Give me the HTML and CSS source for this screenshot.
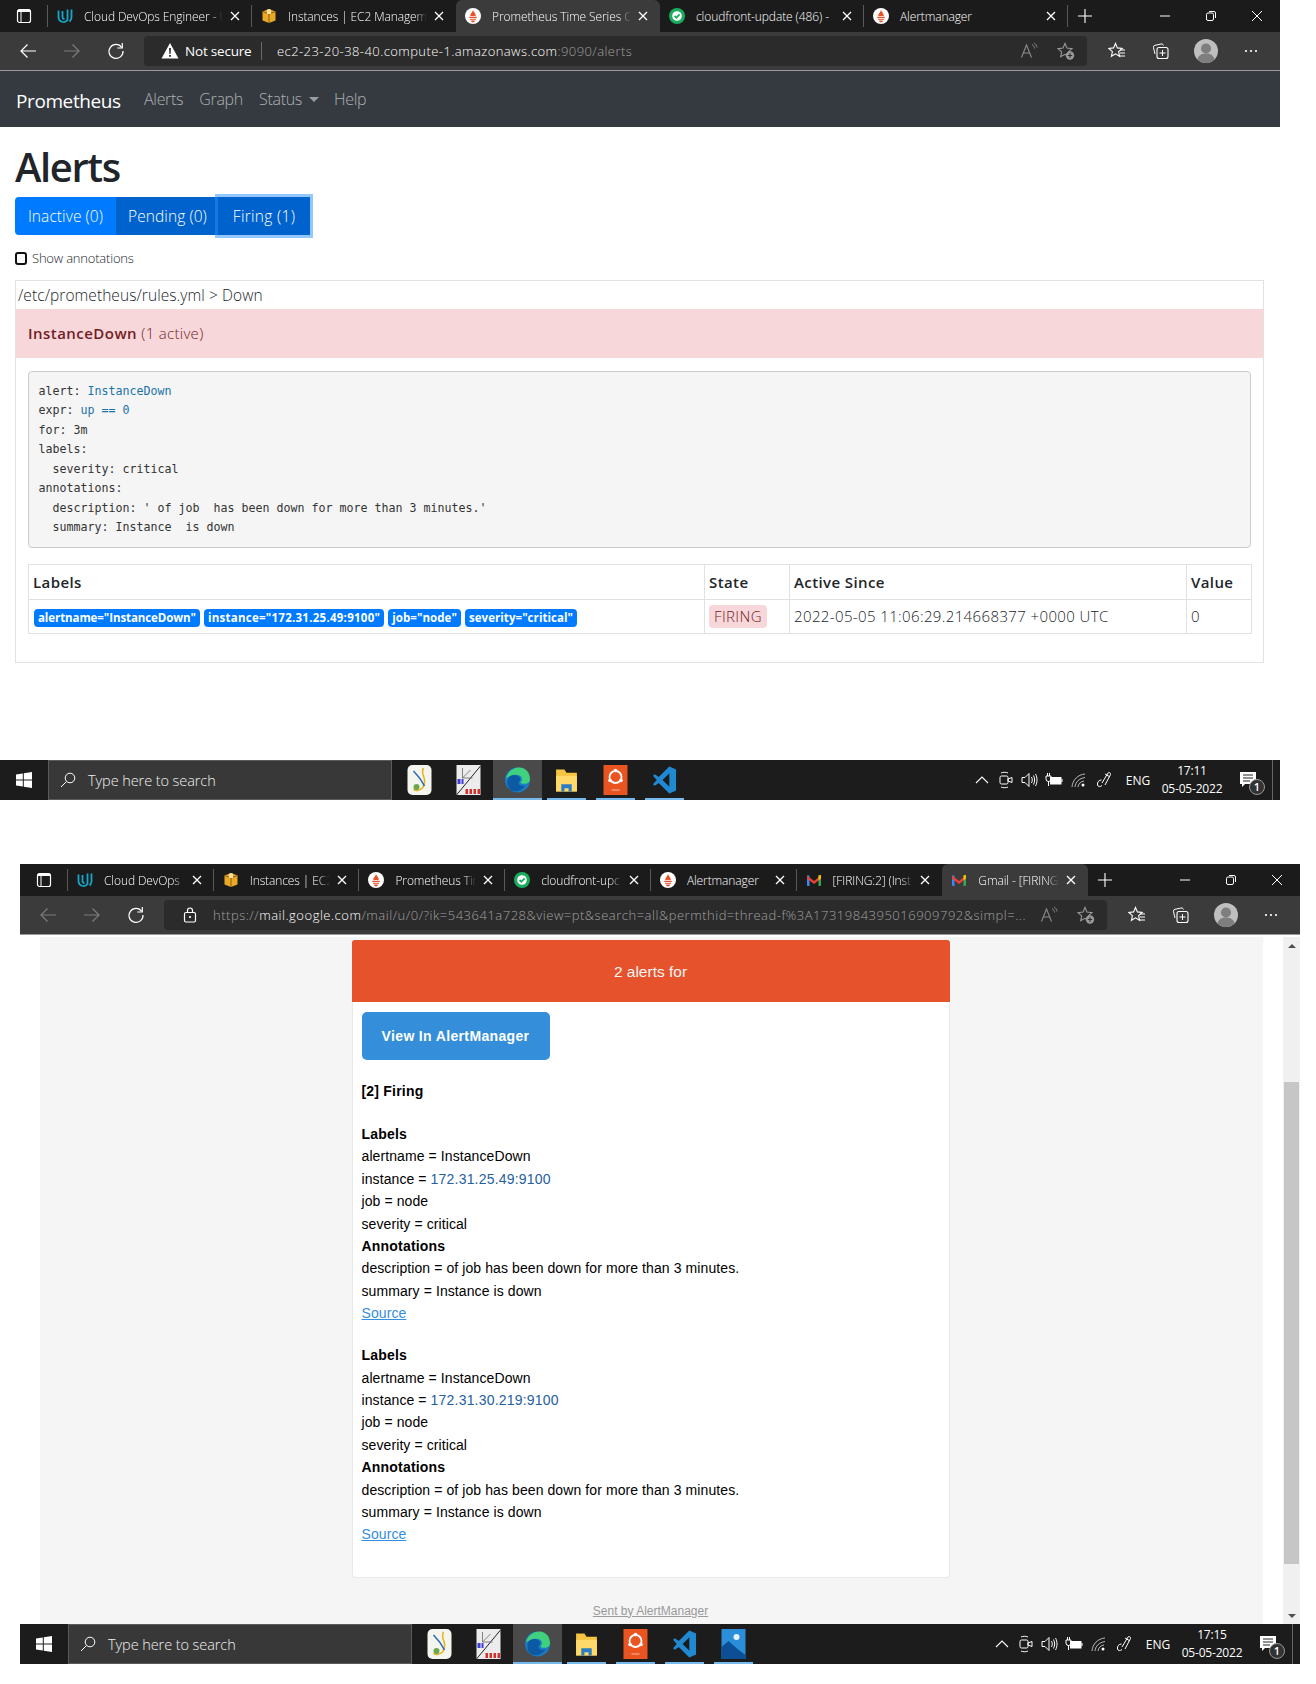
FILE: index.html
```html
<!DOCTYPE html>
<html lang="en">
<head>
<meta charset="utf-8">
<title>Prometheus alerts and Alertmanager email</title>
<link rel="stylesheet" href="styles.css">
</head>
<body>
<svg class="defs" xmlns="http://www.w3.org/2000/svg">
  <symbol id="i-panel" viewBox="0 0 16 16"><rect x="1.5" y="1.5" width="13" height="13" rx="2" fill="none" stroke="#fff" stroke-width="1.2"/><path d="M1.5 4h13v-1a1.5 1.5 0 0 0-1.500-1.500h-10a1.5 1.5 0 0 0-1.500 1.500z" fill="#fff"/><path d="M5 4v10.500" stroke="#fff"/></symbol>
  <symbol id="i-udacity" viewBox="0 0 16 16"><path d="M1.500 2.500v6.500a5 5 0 0 0 9 3V1.500M5.500 3v6.500a2 2 0 0 0 2 1.500M14.500 1.500v8a6 6 0 0 1-2 4" fill="none" stroke="#15a6c9" stroke-width="1.800"/></symbol>
  <symbol id="i-aws" viewBox="0 0 16 16"><path d="M8 1l6.500 2.500v9L8 15l-6.500-2.500v-9z" fill="#e9a825"/><path d="M1.500 3.500L8 6l6.500-2.500M8 6v9" fill="none" stroke="#8a5d10"/><path d="M6 1.800L8 1l2 .8v4.100H6z" fill="#f6dfa2"/></symbol>
  <symbol id="i-prom" viewBox="0 0 16 16"><circle cx="8" cy="8" r="8" fill="#fff"/><path d="M8 2c.5 2 2.800 3 2.800 6H5.200C5.200 5.500 7.500 4.500 8 2z" fill="#e6522c"/><path d="M4.300 8.700h7.400v1.300H4.300zM5 10.800h6v1H5zM6 12.500h4a2 2 0 0 1-4 0z" fill="#e6522c"/></symbol>
  <symbol id="i-check" viewBox="0 0 16 16"><circle cx="8" cy="8" r="8" fill="#1bab5e"/><circle cx="8" cy="8" r="4.800" fill="#fff"/><path d="M5.600 8l1.800 1.800 3.200-3.400" fill="none" stroke="#1bab5e" stroke-width="1.800"/></symbol>
  <symbol id="i-gmail" viewBox="0 0 16 16"><path d="M1 3.500h2.500V14H2a1 1 0 0 1-1-1z" fill="#4285f4"/><path d="M12.500 3.500H15V13a1 1 0 0 1-1 1h-1.500z" fill="#34a853"/><path d="M1 3.500L8 9l7-5.500v3L8 12 1 6.500z" fill="#ea4335"/><path d="M12.500 3.500L15 2.800v3.700l-2.500 2z" fill="#fbbc04"/></symbol>
  <symbol id="i-x" viewBox="0 0 12 12"><path d="M2 2l8 8M10 2l-8 8" stroke="#fff" stroke-width="1.300"/></symbol>
  <symbol id="i-plus" viewBox="0 0 16 16"><path d="M8 1v14M1 8h14" stroke="#fff" stroke-width="1.100"/></symbol>
  <symbol id="i-min" viewBox="0 0 12 12"><path d="M1 6h10" stroke="#fff"/></symbol>
  <symbol id="i-restore" viewBox="0 0 12 12"><rect x="1.500" y="3" width="7" height="7.500" rx="1.500" fill="none" stroke="#fff"/><path d="M4 1.500h5a1.500 1.500 0 0 1 1.500 1.500v5" fill="none" stroke="#fff"/></symbol>
  <symbol id="i-winx" viewBox="0 0 12 12"><path d="M1 1l10 10M11 1L1 11" stroke="#fff"/></symbol>
  <symbol id="i-back" viewBox="0 0 18 18"><path d="M17 9H2M8.500 2.500L2 9l6.500 6.500" fill="none" stroke="currentColor" stroke-width="1.200"/></symbol>
  <symbol id="i-fwd" viewBox="0 0 18 18"><path d="M1 9h15M9.500 2.500L16 9l-6.500 6.500" fill="none" stroke="currentColor" stroke-width="1.200"/></symbol>
  <symbol id="i-reload" viewBox="0 0 18 18"><path d="M14.800 5.500A7 7 0 1 0 16 9" fill="none" stroke="#fff" stroke-width="1.200"/><path d="M15.300 1v5h-5" fill="none" stroke="#fff" stroke-width="1.200"/></symbol>
  <symbol id="i-warn" viewBox="0 0 18 18"><path d="M9 1l8.500 15.500H.5z" fill="#fff"/><path d="M8.100 6h1.800l-.3 6H8.400zM8.100 13h1.800v1.800H8.100z" fill="#222"/></symbol>
  <symbol id="i-lock" viewBox="0 0 14 16"><rect x="1.500" y="5.500" width="11" height="9.500" rx="1.500" fill="none" stroke="#fff" stroke-width="1.200"/><path d="M4.500 5.500V3.500a2.500 2.500 0 0 1 5 0v2" fill="none" stroke="#fff" stroke-width="1.200"/><circle cx="7" cy="10" r="1.100" fill="#fff"/></symbol>
  <symbol id="i-read" viewBox="0 0 18 18"><path d="M1.500 15.500L6.500 3l5 12.500M3.200 11h6.600" fill="none" stroke="#8c8c8c" stroke-width="1.100"/><path d="M12 2.500c1.500.8 2.300 2 2.500 4M14 1c1.800 1 2.800 2.500 3 4.500" fill="none" stroke="#8c8c8c" stroke-width=".9"/></symbol>
  <symbol id="i-favadd" viewBox="0 0 18 18"><path d="M8 1.500l2 4.600 5 .5-3.700 3.300 1 4.800L8 12.300l-4.300 2.400 1-4.800L1 6.600l5-.5z" fill="none" stroke="#9a9a9a" stroke-width="1.100"/><circle cx="13" cy="13.500" r="4.200" fill="#9a9a9a"/><path d="M13 11.300v4.400M10.800 13.500h4.400" stroke="#2b2b2b" stroke-width="1.100"/></symbol>
  <symbol id="i-favs" viewBox="0 0 18 18"><path d="M7.500 1.500l1.900 4.400 4.800.5-3.600 3.200 1 4.700-4.100-2.400-4.100 2.400 1-4.700L.8 6.400l4.800-.5z" fill="none" stroke="#fff" stroke-width="1.100"/><path d="M12 8h5M12 11h5M11 14h6" stroke="#fff"/></symbol>
  <symbol id="i-coll" viewBox="0 0 18 18"><rect x="6" y="5.500" width="11" height="11" rx="2" fill="none" stroke="#fff" stroke-width="1.100"/><path d="M11.500 8v6M8.500 11h6" stroke="#fff"/><path d="M12.500 3.500l-.5-.9a2 2 0 0 0-2-.6L4 3.300A2 2 0 0 0 2.500 5.700L4 12" fill="none" stroke="#fff"/></symbol>
  <symbol id="i-user" viewBox="0 0 24 24"><circle cx="12" cy="12" r="12" fill="#bfbfbf"/><circle cx="12" cy="9.500" r="5" fill="#7e7e7e"/><path d="M3.500 20.500c1-5 5-6 8.500-6s7.500 1 8.500 6a12 12 0 0 1-17 0z" fill="#7e7e7e"/></symbol>
  <symbol id="i-more" viewBox="0 0 16 16"><circle cx="3" cy="8" r="1.100" fill="#fff"/><circle cx="8" cy="8" r="1.100" fill="#fff"/><circle cx="13" cy="8" r="1.100" fill="#fff"/></symbol>
  <symbol id="i-win" viewBox="0 0 16 16"><path d="M0 2.500l6.800-1v6H0zM7.800 1.300L16 0v7.500H7.800zM0 8.500h6.800v6l-6.800-1zM7.800 8.500H16V16l-8.200-1.300z" fill="#fff"/></symbol>
  <symbol id="i-search" viewBox="0 0 16 16"><circle cx="10" cy="6" r="4.800" fill="none" stroke="#fff"/><path d="M6.500 9.500L1 15" stroke="#fff"/></symbol>
  <symbol id="i-app1" viewBox="0 0 24 30"><rect width="24" height="30" rx="5" fill="#f5f5f0"/><path d="M16 3c-4 7 5 10-1 20-3 3-8 3-9 1" fill="none" stroke="#e6b422" stroke-width="1.600"/><path d="M6 6c5 5 8 9 11 15" fill="none" stroke="#2b6cb0" stroke-width="1.600"/><circle cx="9" cy="22" r="3" fill="#6aa84f"/></symbol>
  <symbol id="i-app2" viewBox="0 0 24 30"><rect width="24" height="30" fill="#ececec"/><path d="M0 30L24 1" stroke="#222"/><path d="M6 3v10h10M6 13l8-8" fill="none" stroke="#666" stroke-width=".8"/><path d="M1 14h3v5H1zM5 14h2v5H5z" fill="#3d3dd8"/><path d="M9 24h2.500v5H9zM13 24h2.500v5H13zM17 24h2.500v5H17zM21 24h2.500v5H21z" fill="#d32f2f"/></symbol>
  <symbol id="i-edge" viewBox="0 0 26 26"><circle cx="13" cy="13" r="13" fill="#1a7bc4"/><path d="M1 11C3 3 10 0 15 0c7 0 11 6 11 12 0 3-2 5-6 5-3 0-4-1-4-2 2-1 2-3 1-5-2-3-8-3-11-1z" fill="#3fd17d"/><path d="M4 10c3-3 8-3 11 0 1 2 1 4-1 5 0 3 3 5 7 4-3 5-9 7-14 5-4-2-6-8-3-14z" fill="#0c59a4"/></symbol>
  <symbol id="i-folder" viewBox="0 0 24 26"><path d="M2 3h8l2 3h10v18H2z" fill="#f6c342"/><path d="M2 9h20v15H2z" fill="#ffd96a"/><path d="M7 24v-7h10v7h-3v-3h-4v3z" fill="#2b7cc4"/></symbol>
  <symbol id="i-ubuntu" viewBox="0 0 24 30"><rect width="24" height="30" fill="#e95420"/><circle cx="12" cy="12" r="6" fill="none" stroke="#fff" stroke-width="1.800"/><circle cx="12" cy="5.500" r="1.800" fill="#fff"/><circle cx="6.500" cy="15.500" r="1.800" fill="#fff"/><circle cx="17.500" cy="15.500" r="1.800" fill="#fff"/><path d="M8 25h8" stroke="#f7b9a2"/></symbol>
  <symbol id="i-vscode" viewBox="0 0 26 30"><path d="M18 1l7 3v22l-7 3L7 18l-4 3-2-1.500L5 15 1 10.500 3 9l4 3z" fill="#1f8ad2"/><path d="M18 8v14l-7-7z" fill="#1c1c1c"/></symbol>
  <symbol id="i-photos" viewBox="0 0 24 30"><rect width="24" height="30" fill="#2a8fd8"/><circle cx="15" cy="8" r="3" fill="#e8f4fc"/><path d="M0 30V18l7-6 9 8 8 6v4z" fill="#0d4f94"/></symbol>
  <symbol id="i-chev" viewBox="0 0 14 14"><path d="M1 10l6-6 6 6" fill="none" stroke="#fff" stroke-width="1.100"/></symbol>
  <symbol id="i-cam" viewBox="0 0 14 18"><rect x="1" y="5" width="8" height="8" rx="1.500" fill="none" stroke="#fff"/><path d="M9 8l4-1.500v5L9 10zM2 2c2-1 5-1 7 0M2 16c2 1 5 1 7 0" fill="none" stroke="#fff"/></symbol>
  <symbol id="i-vol" viewBox="0 0 18 16"><path d="M1 5.500h3l4-4v13l-4-4H1z" fill="none" stroke="#fff"/><path d="M10.500 5c1 2 1 4 0 6M12.500 3.500c1.500 3 1.500 6 0 9M14.500 2c2 3.500 2 8.500 0 12" fill="none" stroke="#fff"/></symbol>
  <symbol id="i-batt" viewBox="0 0 18 14"><rect x="5.500" y="4.500" width="10.500" height="6.500" fill="#fff" stroke="#fff"/><path d="M17 6v3" stroke="#fff"/><path d="M1 3h5v3a2 2 0 0 1-5 0zM2.500 0v3M4.500 0v3M3.500 8v5" fill="none" stroke="#fff"/></symbol>
  <symbol id="i-wifi" viewBox="0 0 16 16"><path d="M1 15C1.500 8 7 2.500 14 2M4 15c.5-5 4-8.500 10-9.500M7 15c.3-3 2.500-5.500 6-6" fill="none" stroke="#fff" stroke-width=".9" opacity=".75"/><circle cx="12" cy="13" r="1.500" fill="#fff"/></symbol>
  <symbol id="i-pen" viewBox="0 0 18 18"><path d="M6 12l6-10c1-1 3 0 2.500 1.500L9 14M9 3l5 3M5.500 9C3 9 1 11 1.500 14c.4 2 3 2 4.500.5" fill="none" stroke="#fff"/></symbol>
  <symbol id="i-notif" viewBox="0 0 16 16"><path d="M0 0h16v12H5l-3 3v-3H0z" fill="#fff"/><path d="M3 3h10M3 6h10M3 9h7" stroke="#222"/></symbol>
</svg>

<section class="shot">
  <header class="tabbar">
    <div class="tab-start"><svg class="i16"><use href="#i-panel"/></svg></div>
    <div class="tabs">
      <div class="tab sep"><svg class="i16"><use href="#i-udacity"/></svg><span class="tab-title fade">Cloud DevOps Engineer - U</span><svg class="ix"><use href="#i-x"/></svg></div>
      <div class="tab"><svg class="i16"><use href="#i-aws"/></svg><span class="tab-title fade">Instances | EC2 Managem</span><svg class="ix"><use href="#i-x"/></svg></div>
      <div class="tab active"><svg class="i16"><use href="#i-prom"/></svg><span class="tab-title fade">Prometheus Time Series C</span><svg class="ix"><use href="#i-x"/></svg></div>
      <div class="tab sep"><svg class="i16"><use href="#i-check"/></svg><span class="tab-title">cloudfront-update (486) -</span><svg class="ix"><use href="#i-x"/></svg></div>
      <div class="tab sep"><svg class="i16"><use href="#i-prom"/></svg><span class="tab-title">Alertmanager</span><svg class="ix"><use href="#i-x"/></svg></div>
    </div>
    <svg class="plus"><use href="#i-plus"/></svg>
    <div class="winctl"><svg class="i12"><use href="#i-min"/></svg><svg class="i12"><use href="#i-restore"/></svg><svg class="i12"><use href="#i-winx"/></svg></div>
  </header>
  <div class="toolbar">
    <div class="navbtns"><svg class="i18 on"><use href="#i-back"/></svg><svg class="i18 off"><use href="#i-fwd"/></svg><svg class="i18"><use href="#i-reload"/></svg></div>
    <div class="omni">
      <svg class="i18 warn"><use href="#i-warn"/></svg>
      <span class="notsecure">Not secure</span>
      <span class="url url-a">ec2-23-20-38-40.compute-1.amazonaws.com<span class="dim">:9090/alerts</span></span>
      <svg class="i18 omni-r"><use href="#i-read"/></svg><svg class="i18 omni-s"><use href="#i-favadd"/></svg>
    </div>
    <div class="tools"><svg class="i18"><use href="#i-favs"/></svg><svg class="i18"><use href="#i-coll"/></svg><svg class="i22"><use href="#i-user"/></svg><svg class="i16"><use href="#i-more"/></svg></div>
  </div>

  <nav class="navbar">
    <a class="brand">Prometheus</a>
    <a class="navlink">Alerts</a>
    <a class="navlink">Graph</a>
    <a class="navlink caret">Status</a>
    <a class="navlink">Help</a>
  </nav>

  <main class="page">
    <h1 class="title">Alerts</h1>
    <div class="btngroup">
      <span class="btn btn-inactive">Inactive (0)</span>
      <span class="btn btn-pending">Pending (0)</span>
      <span class="btn btn-firing">Firing (1)</span>
    </div>
    <label class="annot"><span class="cb"></span>Show annotations</label>
    <div class="panel">
      <div class="rulepath">/etc/prometheus/rules.yml &gt; Down</div>
      <div class="alertrow"><strong>InstanceDown</strong> (1 active)</div>
      <div class="panelbody">
<pre class="rule">alert: <span class="hl">InstanceDown</span>
expr: <span class="hl">up == 0</span>
for: 3m
labels:
  severity: critical
annotations:
  description: ' of job  has been down for more than 3 minutes.'
  summary: Instance  is down</pre>
        <table class="alerts">
          <thead><tr><th class="c-labels">Labels</th><th class="c-state">State</th><th class="c-since">Active Since</th><th class="c-value">Value</th></tr></thead>
          <tbody><tr>
            <td class="labels"><span class="badge">alertname="InstanceDown"</span><span class="badge b-inst">instance="172.31.25.49:9100"</span><span class="badge b-wide">job="node"</span><span class="badge b-wide">severity="critical"</span></td>
            <td><span class="state">FIRING</span></td>
            <td>2022-05-05 11:06:29.214668377 +0000 UTC</td>
            <td>0</td>
          </tr></tbody>
        </table>
      </div>
    </div>
  </main>

  <footer class="taskbar">
    <div class="startbtn"><svg class="i16"><use href="#i-win"/></svg></div>
    <div class="searchbox"><svg class="i16"><use href="#i-search"/></svg><span>Type here to search</span></div>
    <div class="tile"><svg class="ic-app"><use href="#i-app1"/></svg></div>
    <div class="tile"><svg class="ic-app"><use href="#i-app2"/></svg></div>
    <div class="tile running focus"><svg class="ic-app"><use href="#i-edge"/></svg></div>
    <div class="tile running"><svg class="ic-app"><use href="#i-folder"/></svg></div>
    <div class="tile running"><svg class="ic-app"><use href="#i-ubuntu"/></svg></div>
    <div class="tile running"><svg class="ic-app"><use href="#i-vscode"/></svg></div>
    <div class="tray">
      <span class="t24"><svg class="i14"><use href="#i-chev"/></svg></span>
      <span class="t24"><svg class="i18"><use href="#i-cam"/></svg></span>
      <span class="t24"><svg class="i18"><use href="#i-vol"/></svg></span>
      <span class="t24"><svg class="i18"><use href="#i-batt"/></svg></span>
      <span class="t25"><svg class="i16"><use href="#i-wifi"/></svg></span>
      <span class="t28"><svg class="i18"><use href="#i-pen"/></svg></span>
      <span class="eng">ENG</span>
      <span class="clock">17:11<br>05-05-2022</span>
      <span class="notif"><svg class="i16"><use href="#i-notif"/></svg><span class="notifnum">1</span></span>
      <span class="showdesk"></span>
    </div>
  </footer>
</section>

<section class="shot second">
  <header class="tabbar">
    <div class="tab-start"><svg class="i16"><use href="#i-panel"/></svg></div>
    <div class="tabs">
      <div class="tab sep"><svg class="i16"><use href="#i-udacity"/></svg><span class="tab-title fade">Cloud DevOps</span><svg class="ix"><use href="#i-x"/></svg></div>
      <div class="tab sep"><svg class="i16"><use href="#i-aws"/></svg><span class="tab-title fade">Instances | EC2</span><svg class="ix"><use href="#i-x"/></svg></div>
      <div class="tab sep"><svg class="i16"><use href="#i-prom"/></svg><span class="tab-title fade">Prometheus Tir</span><svg class="ix"><use href="#i-x"/></svg></div>
      <div class="tab sep"><svg class="i16"><use href="#i-check"/></svg><span class="tab-title fade">cloudfront-upc</span><svg class="ix"><use href="#i-x"/></svg></div>
      <div class="tab sep"><svg class="i16"><use href="#i-prom"/></svg><span class="tab-title">Alertmanager</span><svg class="ix"><use href="#i-x"/></svg></div>
      <div class="tab"><svg class="i16"><use href="#i-gmail"/></svg><span class="tab-title fade">[FIRING:2] (Inst</span><svg class="ix"><use href="#i-x"/></svg></div>
      <div class="tab active"><svg class="i16"><use href="#i-gmail"/></svg><span class="tab-title fade">Gmail - [FIRING</span><svg class="ix"><use href="#i-x"/></svg></div>
    </div>
    <svg class="plus"><use href="#i-plus"/></svg>
    <div class="winctl"><svg class="i12"><use href="#i-min"/></svg><svg class="i12"><use href="#i-restore"/></svg><svg class="i12"><use href="#i-winx"/></svg></div>
  </header>
  <div class="toolbar">
    <div class="navbtns"><svg class="i18 off"><use href="#i-back"/></svg><svg class="i18 off"><use href="#i-fwd"/></svg><svg class="i18"><use href="#i-reload"/></svg></div>
    <div class="omni">
      <svg class="i16 lock"><use href="#i-lock"/></svg>
      <span class="url url-b"><span class="dim">https://</span>mail.google.com<span class="dim">/mail/u/0/?ik=543641a728&amp;view=pt&amp;search=all&amp;permthid=thread-f%3A1731984395016909792&amp;simpl=...</span></span>
      <svg class="i18 omni-r"><use href="#i-read"/></svg><svg class="i18 omni-s"><use href="#i-favadd"/></svg>
    </div>
    <div class="tools"><svg class="i18"><use href="#i-favs"/></svg><svg class="i18"><use href="#i-coll"/></svg><svg class="i22"><use href="#i-user"/></svg><svg class="i16"><use href="#i-more"/></svg></div>
  </div>

  <div class="gmail">
    <div class="mailbg">
      <div class="card">
        <div class="cardhead">2 alerts for</div>
        <div class="cardbody">
          <a class="viewbtn">View In AlertManager</a>
          <div class="firing"><strong>[2] Firing</strong></div>
          <div class="alertblock">
            <div><strong>Labels</strong></div>
            <div>alertname = InstanceDown</div>
            <div>instance = <a class="ip">172.31.25.49:9100</a></div>
            <div>job = node</div>
            <div>severity = critical</div>
            <div><strong>Annotations</strong></div>
            <div>description = of job has been down for more than 3 minutes.</div>
            <div>summary = Instance is down</div>
            <div><a class="source">Source</a></div>
          </div>
          <div class="alertblock">
            <div><strong>Labels</strong></div>
            <div>alertname = InstanceDown</div>
            <div>instance = <a class="ip">172.31.30.219:9100</a></div>
            <div>job = node</div>
            <div>severity = critical</div>
            <div><strong>Annotations</strong></div>
            <div>description = of job has been down for more than 3 minutes.</div>
            <div>summary = Instance is down</div>
            <div><a class="source">Source</a></div>
          </div>
        </div>
      </div>
      <div class="sentby">Sent by AlertManager</div>
    </div>
    <div class="scrollbar">
      <span class="arrow-up"></span>
      <span class="thumb"></span>
      <span class="arrow-down"></span>
    </div>
  </div>

  <footer class="taskbar">
    <div class="startbtn"><svg class="i16"><use href="#i-win"/></svg></div>
    <div class="searchbox"><svg class="i16"><use href="#i-search"/></svg><span>Type here to search</span></div>
    <div class="tile"><svg class="ic-app"><use href="#i-app1"/></svg></div>
    <div class="tile"><svg class="ic-app"><use href="#i-app2"/></svg></div>
    <div class="tile running focus"><svg class="ic-app"><use href="#i-edge"/></svg></div>
    <div class="tile running"><svg class="ic-app"><use href="#i-folder"/></svg></div>
    <div class="tile running"><svg class="ic-app"><use href="#i-ubuntu"/></svg></div>
    <div class="tile running"><svg class="ic-app"><use href="#i-vscode"/></svg></div>
    <div class="tile running"><svg class="ic-app"><use href="#i-photos"/></svg></div>
    <div class="tray">
      <span class="t24"><svg class="i14"><use href="#i-chev"/></svg></span>
      <span class="t24"><svg class="i18"><use href="#i-cam"/></svg></span>
      <span class="t24"><svg class="i18"><use href="#i-vol"/></svg></span>
      <span class="t24"><svg class="i18"><use href="#i-batt"/></svg></span>
      <span class="t25"><svg class="i16"><use href="#i-wifi"/></svg></span>
      <span class="t28"><svg class="i18"><use href="#i-pen"/></svg></span>
      <span class="eng">ENG</span>
      <span class="clock">17:15<br>05-05-2022</span>
      <span class="notif"><svg class="i16"><use href="#i-notif"/></svg><span class="notifnum">1</span></span>
      <span class="showdesk"></span>
    </div>
  </footer>
</section>
</body>
</html>
```

FILE: styles.css
```css
* { box-sizing: border-box; }
html, body { margin: 0; padding: 0; background: #fff; }
body { font-family: "Open Sans", "Liberation Sans", sans-serif; color: #212529; width: 1316px; height: 1684px; overflow: hidden; }
svg { display: block; flex: none; }
.defs { display: none; }
.i12 { width: 12px; height: 12px; }
.i14 { width: 14px; height: 14px; }
.i16 { width: 16px; height: 16px; }
.i18 { width: 18px; height: 18px; }
.i22 { width: 24px; height: 24px; }

.shot { width: 1280px; height: 800px; display: flex; flex-direction: column; }
.second { margin: 64px 0 0 20px; }

/* browser chrome */
.tabbar { height: 32px; background: #1b1b1b; display: flex; align-items: stretch; flex: none; }
.tab-start { width: 48px; padding-left: 16px; display: flex; align-items: center; border-right: 1px solid #5a5a5a; margin: 5px 0; }
.tabs { width: 1020px; display: flex; flex: none; }
.tab { flex: 1 1 0; min-width: 0; display: flex; align-items: center; padding: 0 11px 0 9px; gap: 11px; position: relative; }
.tab.sep::after { content: ""; position: absolute; right: 0; top: 5px; bottom: 5px; width: 1px; background: #5a5a5a; }
.tab.active { background: #3b3b3b; border-radius: 6px 6px 0 0; }
.tab-title { flex: 1; min-width: 0; white-space: nowrap; font-size: 12px; font-weight: 300; letter-spacing: -.1px; color: #fff; }
.tab-title.fade { -webkit-mask-image: linear-gradient(to right, #000 calc(100% - 12px), transparent); mask-image: linear-gradient(to right, #000 calc(100% - 12px), transparent); }
.ix { width: 12px; height: 12px; margin-left: -5px; }
.plus { width: 16px; height: 16px; align-self: center; margin-left: 9px; }
.winctl { margin-left: auto; display: flex; align-items: center; gap: 34px; padding-right: 17px; }
.toolbar { height: 39px; background: #3b3b3b; border-bottom: 1px solid #9a9a9a; display: flex; align-items: center; flex: none; color: #fff; }
.navbtns { width: 144px; display: flex; gap: 26px; padding-left: 19px; flex: none; }
.navbtns .on { color: #fff; }
.navbtns .off { color: #7d7d7d; }
.omni { width: 943px; height: 30px; background: #2b2b2b; border-radius: 4px; display: flex; align-items: center; font-size: 13px; color: #fff; flex: none; }
.warn { margin-left: 17px; }
.notsecure { margin-left: 6px; width: 77px; height: 18px; line-height: 18px; border-right: 1px solid #6a6a6a; font-size: 13.500px; letter-spacing: -.2px; }
.url { white-space: nowrap; letter-spacing: .42px; font-weight: 300; }
.url-a { margin-left: 15px; width: 540px; flex: none; }
.url-b { margin-left: 16px; width: 826px; flex: none; letter-spacing: .51px; }
.lock { margin-left: 19px; width: 14px; }
.dim { color: #a0a0a0; }
.omni-r { margin-left: auto; }
.omni-s { margin: 0 12px 0 19px; }
.tools { display: flex; align-items: center; padding-left: 21px; gap: 25px; }

/* prometheus */
.navbar { height: 56px; background: #343a40; display: flex; align-items: center; flex: none; padding-left: 16px; }
.brand { font-size: 19px; color: #fff; width: 128px; letter-spacing: -.4px; margin-top: 3px; }
.navlink { font-size: 16px; font-weight: 300; color: rgba(255, 255, 255, .6); margin-right: 16px; letter-spacing: -.3px; }
.navlink.caret { display: flex; align-items: center; margin-right: 15px; }
.navlink.caret::after { content: ""; margin-left: 7px; border-top: 5px solid rgba(255, 255, 255, .5); border-left: 5px solid transparent; border-right: 5px solid transparent; }
.page { padding: 0 16px 0 15px; flex: 1; }
.title { margin: 0; padding-top: 16px; font-size: 40px; line-height: 48px; font-weight: 600; letter-spacing: -1.4px; height: 70px; color: #212529; }
.btngroup { display: flex; height: 38px; }
.btn { display: flex; align-items: center; justify-content: center; color: #fff; font-size: 15.500px; font-weight: 300; letter-spacing: .08px; }
.btn-inactive { width: 101px; background: #007bff; border-radius: 4px 0 0 4px; }
.btn-pending { width: 102px; padding-left: 1px; background: #0062cc; }
.btn-firing { width: 92px; background: #0062cc; box-shadow: 0 0 0 3px rgba(38, 143, 255, .5); letter-spacing: .3px; }
.annot { display: flex; align-items: center; height: 18px; margin-top: 14px; font-size: 13px; font-weight: 300; letter-spacing: -.2px; color: #212529; }
.cb { width: 12px; height: 13px; border: 2px solid #111; border-radius: 3px; margin-right: 5px; }
.panel { margin-top: 13px; border: 1px solid #e2e2e2; }
.rulepath { height: 28px; line-height: 28px; padding-left: 2px; font-size: 15.500px; font-weight: 300; letter-spacing: .07px; }
.alertrow { height: 49px; line-height: 48px; background: #f8d7da; color: #721c24; padding-left: 12px; font-size: 15px; font-weight: 300; letter-spacing: .3px; }
.alertrow strong { font-weight: 600; letter-spacing: .46px; }
.panelbody { padding: 13px 12px 28px; }
.rule { margin: 0; padding: 9.500px; background: #f5f5f5; border: 1px solid #ccc; border-radius: 4px; font-family: "DejaVu Sans Mono", "Liberation Mono", monospace; font-size: 11.630px; line-height: 19.500px; color: #333; }
.hl { color: #1a73a8; }
.alerts { width: 100%; margin-top: 16px; border-collapse: collapse; table-layout: fixed; font-size: 15px; }
.alerts th, .alerts td { border: 1px solid #dee2e6; padding: 0 4px; text-align: left; height: 34.500px; }
.alerts th { font-weight: 600; letter-spacing: .4px; }
.alerts td { font-weight: 300; letter-spacing: .38px; }
.c-labels { width: 676px; }
.c-state { width: 85px; }
.c-since { width: 397px; }
.c-value { width: 65px; }
.alerts .labels { white-space: nowrap; padding-left: 5px; }
.badge { display: inline-block; height: 18px; line-height: 18px; padding: 0 4px; margin-right: 4px; background: #007bff; color: #fff; border-radius: 4px; font-size: 11.500px; font-weight: 700; letter-spacing: -.08px; vertical-align: middle; }
.b-inst { letter-spacing: .26px; }
.b-wide { letter-spacing: .06px; }
.state { display: inline-block; height: 23px; line-height: 23px; padding: 0 5px; background: #f8d7da; color: #721c24; border-radius: 4px; font-size: 15px; vertical-align: middle; }

/* taskbar */
.taskbar { height: 40px; background: #1c1c1c; display: flex; flex: none; margin-top: auto; color: #fff; }
.startbtn { width: 48px; display: flex; align-items: center; justify-content: center; }
.searchbox { width: 344px; background: #383838; border: 1px solid #5c5c5c; display: flex; align-items: center; gap: 12px; padding-left: 11px; font-size: 14.500px; font-weight: 300; letter-spacing: -.08px; color: #f0f0f0; margin-right: 3px; }
.tile { width: 49px; display: flex; align-items: center; justify-content: center; position: relative; }
.tile.focus { background: #4a4a4a; }
.tile.running::after { content: ""; position: absolute; left: 5px; right: 5px; bottom: 0; height: 2px; background: #76b9ed; }
.tile.focus::after { left: 0; right: 0; }
.ic-app { width: 25px; height: 30px; }
.tray { margin-left: auto; display: flex; align-items: center; height: 40px; }
.t24, .t25, .t28 { display: flex; justify-content: center; }
.t24 { width: 24px; }
.t25 { width: 25px; }
.t28 { width: 28px; }
.eng { width: 38px; text-align: center; font-size: 12px; }
.clock { width: 70px; text-align: center; font-size: 12px; line-height: 18px; letter-spacing: -.2px; }
.notif { width: 42px; position: relative; display: flex; justify-content: center; }
.notifnum { position: absolute; left: 22px; top: 7px; width: 16px; height: 16px; border-radius: 50%; background: #333; border: 1px solid #999; font-size: 11px; line-height: 14px; text-align: center; font-weight: 600; }
.showdesk { width: 8px; height: 40px; margin-left: 3px; border-left: 1px solid #666; }

/* gmail print view */
.gmail { flex: 1; display: flex; padding-top: 2px; background: #fff; min-height: 0; }
.mailbg { width: 1223px; margin: 0 20px; background: #f5f5f5; padding: 3px 2px 0 0; font-family: "Liberation Sans", Arial, sans-serif; font-size: 14px; color: #000; overflow: hidden; }
.card { width: 598px; margin: 0 auto; background: #fff; border: 1px solid #e9e9e9; border-top: 0; border-radius: 3px; padding-bottom: 31px; }
.cardhead { height: 62px; line-height: 64px; background: #e6522c; color: #f5f5f5; text-align: center; font-size: 15.500px; border-radius: 3px 3px 0 0; margin: 0 -1px; }
.cardbody { padding: 10px 9px 0; line-height: 22.400px; letter-spacing: .09px; }
.cardbody strong { letter-spacing: .2px; }
.viewbtn { display: block; width: 188px; height: 48px; line-height: 48px; background: #348eda; color: #fff; border-radius: 5px; text-align: center; font-weight: 700; letter-spacing: .35px; margin-bottom: 20px; }
.firing { margin-bottom: 20.500px; }
.alertblock { margin-bottom: 19.600px; }
.alertblock:last-child { margin-bottom: 0; }
.ip { color: #25609f; letter-spacing: .2px; }
.source { color: #348eda; text-decoration: underline; }
.sentby { margin-top: 26px; text-align: center; font-size: 12px; line-height: 14px; color: #999; text-decoration: underline; }
.scrollbar { width: 17px; background: #f0f0f0; display: flex; flex-direction: column; align-items: center; }
.arrow-up { margin-top: 7px; border-bottom: 4px solid #505050; border-left: 4px solid transparent; border-right: 4px solid transparent; }
.thumb { width: 15px; height: 482px; margin-top: 134px; background: #c6c6c6; }
.arrow-down { margin-top: auto; margin-bottom: 6px; border-top: 4px solid #505050; border-left: 4px solid transparent; border-right: 4px solid transparent; }
```
